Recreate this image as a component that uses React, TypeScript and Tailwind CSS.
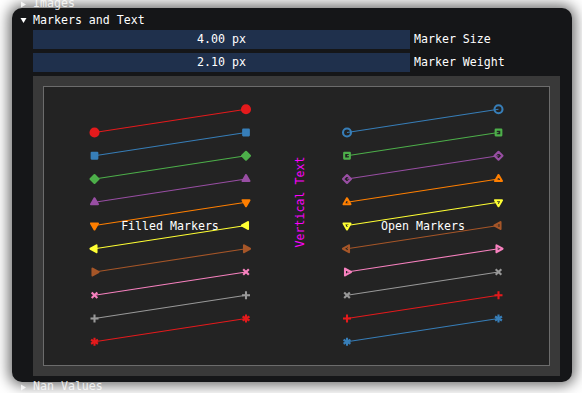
import React from "react";

const FONT = { fontFamily: '"DejaVu Sans Mono", "Liberation Mono", monospace' };

const COLORS = ["#e41a1c", "#377eb8", "#4daf4a", "#984ea3", "#ff7f00", "#ffff33", "#a65628", "#f781bf", "#999999"];
const SHAPES = ["circle", "square", "diamond", "up", "down", "left", "right", "cross", "plus", "asterisk"];

const S = 4; // marker size
const W = 2.1; // marker weight
const R3 = Math.sqrt(3) / 2;
const R2 = Math.SQRT1_2;

// plot coords -> page coords (inner plot area 44..549, 86..365)
const px = (x: number) => 44 + (x / 10) * 505;
const py = (y: number) => 365 - (y / 12) * 279;

const POLYS: Record<string, number[][]> = {
  square: [[R2, R2], [R2, -R2], [-R2, -R2], [-R2, R2]],
  diamond: [[1, 0], [0, -1], [-1, 0], [0, 1]],
  up: [[R3, 0.5], [0, -1], [-R3, 0.5]],
  down: [[R3, -0.5], [0, 1], [-R3, -0.5]],
  left: [[-1, 0], [0.5, R3], [0.5, -R3]],
  right: [[1, 0], [-0.5, R3], [-0.5, -R3]],
};

const LINES: Record<string, number[][][]> = {
  cross: [[[-R2, -R2], [R2, R2]], [[R2, -R2], [-R2, R2]]],
  plus: [[[1, 0], [-1, 0]], [[0, -1], [0, 1]]],
  asterisk: [[[R3, 0.5], [-R3, -0.5]], [[R3, -0.5], [-R3, 0.5]], [[0, -1], [0, 1]]],
};

function Marker({ cx, cy, shape, color, filled }: { cx: number; cy: number; shape: string; color: string; filled: boolean }) {
  if (shape === "circle") {
    return <circle cx={cx} cy={cy} r={S} fill={filled ? color : "none"} stroke={color} strokeWidth={W} />;
  }
  if (POLYS[shape]) {
    const pts = POLYS[shape].map(([x, y]) => `${cx + x * S},${cy + y * S}`).join(" ");
    return <polygon points={pts} fill={filled ? color : "none"} stroke={color} strokeWidth={W} strokeLinejoin="round" />;
  }
  return (
    <g stroke={color} strokeWidth={W}>
      {LINES[shape].map(([a, b], i) => (
        <line key={i} x1={cx + a[0] * S} y1={cy + a[1] * S} x2={cx + b[0] * S} y2={cy + b[1] * S} />
      ))}
    </g>
  );
}

function Series({ x0, x1, open }: { x0: number; x1: number; open: boolean }) {
  return (
    <>
      {SHAPES.map((shape, i) => {
        const color = COLORS[(i + (open ? 1 : 0)) % COLORS.length];
        const a = { x: px(x0), y: py(10 - i) };
        const b = { x: px(x1), y: py(11 - i) };
        return (
          <g key={shape}>
            <line x1={a.x} y1={a.y} x2={b.x} y2={b.y} stroke={color} strokeWidth={1.1} />
            <Marker cx={a.x} cy={a.y} shape={shape} color={color} filled={!open} />
            <Marker cx={b.x} cy={b.y} shape={shape} color={color} filled={!open} />
          </g>
        );
      })}
    </>
  );
}

function Arrow({ down }: { down: boolean }) {
  return (
    <svg width="7" height="7" viewBox="0 0 7 7" className="shrink-0">
      {down ? <polygon points="0.5,1 6.5,1 3.5,6" fill="#fff" /> : <polygon points="1,0.5 6,3.5 1,6.5" fill="#fff" />}
    </svg>
  );
}

function Slider({ value, label }: { value: string; label: string }) {
  return (
    <div className="flex items-center h-[19px]">
      <div className="w-[377px] h-full bg-[#1f304c] flex items-center justify-center pt-[1px] text-white">{value}</div>
      <div className="ml-[4px] pt-[1px] text-white">{label}</div>
    </div>
  );
}

export default function App() {
  return (
    <div className="relative w-[582px] h-[393px] bg-white overflow-hidden text-[11.6px] leading-none" style={FONT}>
      <div className="ml-[12px] mt-[8px] w-[560px] h-[374px] rounded-[10px] bg-[#151618] shadow-[0_0_14px_3px_rgba(0,0,0,0.6)] pt-[5px] pl-[8px]">
        <div className="flex items-center h-[15px] gap-[6px] text-white">
          <Arrow down />
          <span>Markers and Text</span>
        </div>
        <div className="pl-[13px] mt-[2px] flex flex-col gap-[4px]">
          <Slider value="4.00 px" label="Marker Size" />
          <Slider value="2.10 px" label="Marker Weight" />
          <div className="w-[527px] h-[300px] bg-[#393939] p-[10px]">
            <div className="w-full h-full border border-[#6c6c6c] bg-[#232323]">
              <svg width="505" height="278" viewBox="44 87 505 278" className="block">
                <Series x0={1} x1={4} open={false} />
                <Series x0={6} x1={9} open />
                <text x={170} y={226} fill="#fff" textAnchor="middle" dominantBaseline="central" fontSize="11.6" style={FONT}>
                  Filled Markers
                </text>
                <text x={423} y={226} fill="#fff" textAnchor="middle" dominantBaseline="central" fontSize="11.6" style={FONT}>
                  Open Markers
                </text>
                <text
                  transform="translate(300,202) rotate(-90)"
                  fill="#ff00ff"
                  textAnchor="middle"
                  dominantBaseline="central"
                  fontSize="11.6"
                  style={FONT}
                >
                  Vertical Text
                </text>
              </svg>
            </div>
          </div>
        </div>
      </div>
      <div className="absolute left-[20px] top-[-3px] flex items-center h-[14px] gap-[6px] text-white opacity-80">
        <Arrow down={false} />
        <span>Images</span>
      </div>
      <div className="absolute left-[20px] top-[380px] flex items-center h-[14px] gap-[6px] text-white opacity-80">
        <Arrow down={false} />
        <span>Nan Values</span>
      </div>
    </div>
  );
}
